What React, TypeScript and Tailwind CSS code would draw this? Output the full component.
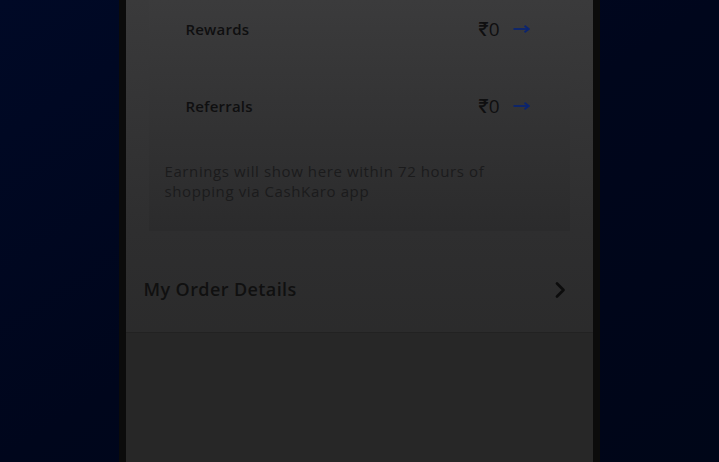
const rows = [
  { label: 'Rewards', amount: '₹0' },
  { label: 'Referrals', amount: '₹0' },
];

const ThinArrow = () => (
  <svg width="17" height="10" viewBox="0 0 17 10" fill="none" className="text-[#0b2470]">
    <path d="M0.5 5H15.5" stroke="currentColor" strokeWidth="1.8" />
    <path d="M11.5 1.8L15.8 5L11.5 8.2" stroke="currentColor" strokeWidth="1.8" fill="none" />
  </svg>
);

const Chevron = () => (
  <svg width="11" height="16" viewBox="0 0 11 16" fill="none" className="text-[#0c0c0c]">
    <path d="M2 1.5L8.5 8L2 14.5" stroke="currentColor" strokeWidth="2.6" strokeLinecap="round" strokeLinejoin="round" />
  </svg>
);

const App = () => {
  return (
    <div
      className="w-[719px] h-[462px] overflow-hidden flex justify-center bg-gradient-to-br from-[#000926] via-[#00061c] to-[#000618]"
      style={{ fontFamily: '"Open Sans", Inter, sans-serif' }}
    >
      {/* phone bezel */}
      <div className="h-full flex bg-[#0b0b0b] px-[7px] ml-[-1px]">
        <div className="w-[467px] h-full flex flex-col bg-gradient-to-b from-[#3a3a3b] via-[#2e2e2f] to-[#272727]">
          {/* earnings card */}
          <div className="mx-[23px] pb-[30px] bg-gradient-to-b from-[#3b3b3c] to-[#2b2b2c]">
            {rows.map((row, i) => (
              <div
                key={row.label}
                className={`mx-[17px] flex items-center justify-between h-[58px] pl-[20px] pr-[23px] ${i === 0 ? 'mt-0' : 'mt-[19px]'}`}
              >
                <span className="text-[15px] font-semibold text-[#0f0f10] tracking-[0.2px]">{row.label}</span>
                <div className="flex items-center gap-[13px]">
                  <span className="text-[19px] font-medium text-[#0f0f10]">{row.amount}</span>
                  <ThinArrow />
                </div>
              </div>
            ))}
            <p className="mt-[26px] pl-[16px] pr-[30px] text-[15px] leading-[20px] text-[#1b1b1c] tracking-[0.6px]">
              Earnings will show here within 72 hours of shopping via CashKaro app
            </p>
          </div>

          {/* order details */}
          <div className="flex items-center justify-between h-[102px] pt-[16px] pl-[18px] pr-[27px] border-b border-[#222222]">
            <span className="text-[18px] font-semibold text-[#101010] tracking-[0.4px]">My Order Details</span>
            <Chevron />
          </div>
          <div className="flex-1 bg-[#272727]" />
        </div>
      </div>
    </div>
  );
};

export default App;
